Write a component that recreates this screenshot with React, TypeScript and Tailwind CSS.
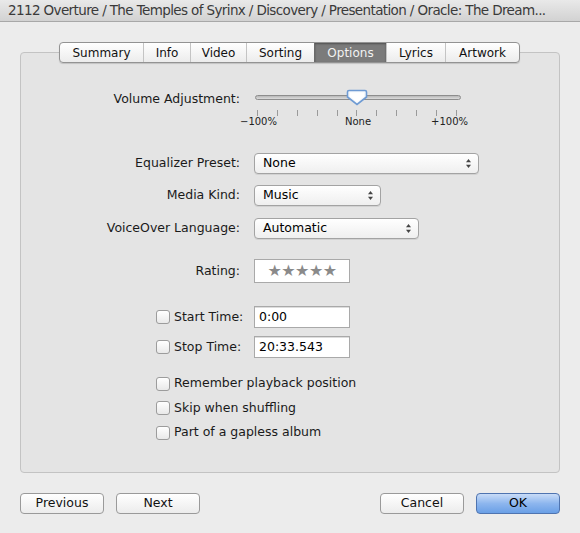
import React from 'react'

const font = { fontFamily: '"Lucida Grande", "DejaVu Sans", sans-serif' }

const tabs = ['Summary', 'Info', 'Video', 'Sorting', 'Options', 'Lyrics', 'Artwork']
const tabWidths = [83, 47, 56, 68, 72, 59, 74]

function Arrows() {
  return (
    <svg width="7" height="11" viewBox="0 0 7 11" className="ml-auto">
      <path d="M3.5 1 L6 4.2 L1 4.2 Z" fill="#444" />
      <path d="M3.5 10 L6 6.8 L1 6.8 Z" fill="#444" />
    </svg>
  )
}

function Popup({ value, width }: { value: string; width: string }) {
  return (
    <div
      className={`${width} flex h-[21px] items-center rounded-[4px] border border-[#a3a3a3] bg-gradient-to-b from-white to-[#efefef] pl-[8px] pr-[6px] text-[12.5px] text-black shadow-[0_1px_0_rgba(0,0,0,0.08)]`}
    >
      <span>{value}</span>
      <Arrows />
    </div>
  )
}

function Check() {
  return (
    <div className="h-[14px] w-[14px] shrink-0 rounded-[3px] border border-[#9c9c9c] bg-gradient-to-b from-white to-[#e9e9e9]" />
  )
}

function Field({ value }: { value: string }) {
  return (
    <div className="flex h-[22px] w-[96px] items-center border border-[#a9a9a9] bg-white px-[4px] text-[12.5px] text-black shadow-[inset_0_1px_0_#ddd]">
      {value}
    </div>
  )
}

function Row({ label, children, className = '' }: { label: string; children: React.ReactNode; className?: string }) {
  return (
    <div className={`flex items-center ${className}`}>
      <div className="w-[219px] text-right text-[12.5px] text-[#1a1a1a]">{label}</div>
      <div className="ml-[14px]">{children}</div>
    </div>
  )
}

function Slider() {
  const ticks = Array.from({ length: 11 }, (_, i) => i)
  return (
    <div className="relative w-[230px]">
      <div className="ml-[1px] mt-[2px] h-[5px] w-[206px] rounded-full border border-[#8d8d8d] bg-gradient-to-b from-[#b8b8b8] to-[#dcdcdc]" />
      <svg width="22" height="17" viewBox="0 0 22 17" className="absolute left-[92px] top-[-6px]">
        <path d="M3 1.5 H19 Q20.5 1.5 20.5 3 V8 L11 15.5 L1.5 8 V3 Q1.5 1.5 3 1.5 Z" fill="#f4f8fc" stroke="#6f9bd3" strokeWidth="1.6" />
        <path d="M4 3.5 H18 V7.5 L11 13 L4 7.5 Z" fill="#ffffff" />
      </svg>
      <div className="mt-[10px] flex w-[206px] justify-between px-[3px]">
        {ticks.map(t => (
          <div key={t} className="h-[6px] w-px bg-[#9a9a9a]" />
        ))}
      </div>
      <div className="relative ml-[-14px] -mt-[2px] flex w-[228px] justify-between text-[10px] text-[#222]">
        <span>−100%</span>
        <span className="ml-[8px]">None</span>
        <span>+100%</span>
      </div>
    </div>
  )
}

export default function App() {
  return (
    <div className="flex h-[533px] w-[580px] flex-col bg-[#ececec]" style={font}>
      <div className="flex h-[22px] shrink-0 items-center overflow-hidden whitespace-nowrap border-b border-[#a8a8a8] bg-gradient-to-b from-[#e9e9e9] to-[#d2d2d2] pl-[8px] text-[13.5px] tracking-[-0.62px] text-[#3a3a3a]">
        2112 Overture / The Temples of Syrinx / Discovery / Presentation / Oracle: The Dream...
      </div>

      <div className="mx-[20px] mt-[30px] h-[421px] rounded-[4px] border border-[#c3c3c3] bg-[#e4e4e4]">
        <div className="-mt-[11px] ml-[38px] flex h-[21px] w-[461px] overflow-hidden rounded-[4px] border border-[#939393] bg-gradient-to-b from-white to-[#ececec] text-[12px] shadow-[0_1px_1px_rgba(0,0,0,0.15)]">
          {tabs.map((t, i) => (
            <div
              key={t}
              style={{ width: tabWidths[i] }}
              className={
                t === 'Options'
                  ? 'flex items-center justify-center border-l border-[#6a6a6a] bg-[#7b7b7b] text-[#f2f2f2] shadow-[inset_0_1px_2px_rgba(0,0,0,0.35)]'
                  : i === 0
                    ? 'flex items-center justify-center text-[#111]'
                    : 'flex items-center justify-center border-l border-[#c4c4c4] text-[#111]'
              }
            >
              {t}
            </div>
          ))}
        </div>

        <div className="mt-[30px] flex items-start">
          <div className="-mt-[3px] w-[219px] text-right text-[12.5px] text-[#1a1a1a]">Volume Adjustment:</div>
          <div className="ml-[14px]">
            <Slider />
          </div>
        </div>

        <Row label="Equalizer Preset:" className="mt-[24px]">
          <Popup value="None" width="w-[225px]" />
        </Row>
        <Row label="Media Kind:" className="mt-[11px]">
          <Popup value="Music" width="w-[127px]" />
        </Row>
        <Row label="VoiceOver Language:" className="mt-[12px]">
          <Popup value="Automatic" width="w-[165px]" />
        </Row>
        <Row label="Rating:" className="mt-[20px]">
          <div className="flex h-[24px] w-[96px] items-center justify-center border border-[#a9a9a9] bg-white text-[16px] tracking-[-0.5px] text-[#8a8a8a]">
            ★★★★★
          </div>
        </Row>

        <div className="mt-[23px] flex items-center">
          <div className="ml-[135px] flex w-[98px] items-center gap-[4px] text-[12.5px] text-[#1a1a1a]">
            <Check />
            <span>Start Time:</span>
          </div>
          <Field value="0:00" />
        </div>
        <div className="mt-[8px] flex items-center">
          <div className="ml-[135px] flex w-[98px] items-center gap-[4px] text-[12.5px] text-[#1a1a1a]">
            <Check />
            <span>Stop Time:</span>
          </div>
          <Field value="20:33.543" />
        </div>

        <div className="ml-[135px] mt-[18px] flex flex-col gap-[9.5px] text-[12.5px] text-[#1a1a1a]">
          {['Remember playback position', 'Skip when shuffling', 'Part of a gapless album'].map(l => (
            <div key={l} className="flex h-[15px] items-center gap-[4px]">
              <Check />
              <span>{l}</span>
            </div>
          ))}
        </div>
      </div>

      <div className="mx-[20px] mt-[20px] flex text-[12.5px] text-[#111]">
        <div className="flex h-[21px] w-[84px] items-center justify-center rounded-[4px] border border-[#9a9a9a] bg-gradient-to-b from-white to-[#ececec]">Previous</div>
        <div className="ml-[12px] flex h-[21px] w-[84px] items-center justify-center rounded-[4px] border border-[#9a9a9a] bg-gradient-to-b from-white to-[#ececec]">Next</div>
        <div className="ml-auto flex h-[21px] w-[84px] items-center justify-center rounded-[4px] border border-[#9a9a9a] bg-gradient-to-b from-white to-[#ececec]">Cancel</div>
        <div className="ml-[12px] flex h-[21px] w-[84px] items-center justify-center rounded-[4px] border border-[#4f74b0] bg-gradient-to-b from-[#c9dcf7] via-[#8db6ee] to-[#6a9fe6] text-black">OK</div>
      </div>
    </div>
  )
}
